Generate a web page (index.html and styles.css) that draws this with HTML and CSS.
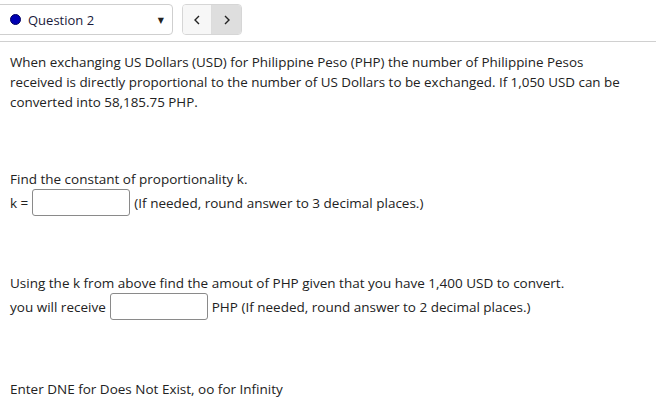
FILE: index.html
```html
<!DOCTYPE html>
<html>
<head>
<meta charset="utf-8">
<link rel="stylesheet" href="styles.css">
</head>
<body>
<div class="header">
  <div class="qselect">
    <span class="dot"></span>
    <span class="qlabel">Question 2</span>
    <span class="caret">&#9660;</span>
  </div>
  <div class="navgroup">
    <div class="navbtn prev"><svg width="8" height="10" viewBox="0 0 8 10"><path d="M6 1 L2 5 L6 9" fill="none" stroke="#222" stroke-width="1.4"/></svg></div>
    <div class="navbtn next"><svg width="8" height="10" viewBox="0 0 8 10"><path d="M2 1 L6 5 L2 9" fill="none" stroke="#222" stroke-width="1.4"/></svg></div>
  </div>
</div>
<div class="content">
  <p class="intro">When exchanging US Dollars (USD) for Philippine Peso (PHP) the number of Philippine Pesos received is directly proportional to the number of US Dollars to be exchanged. If 1,050 USD can be converted into 58,185.75 PHP.</p>
  <div class="part part1">
    <div class="line">Find the constant of proportionality k.</div>
    <div class="row">k =<span class="box"></span>(If needed, round answer to 3 decimal places.)</div>
  </div>
  <div class="part part2">
    <div class="line">Using the k from above find the amout of PHP given that you have 1,400 USD to convert.</div>
    <div class="row">you will receive<span class="box"></span>PHP (If needed, round answer to 2 decimal places.)</div>
  </div>
  <div class="part part3">
    <div class="line">Enter DNE for Does Not Exist, oo for Infinity</div>
  </div>
</div>
</body>
</html>
```
FILE: styles.css
```css
* { box-sizing: border-box; }
html, body { margin: 0; padding: 0; background: #fff; }
body {
  font-family: "Open Sans", "DejaVu Sans", sans-serif;
  font-size: 13.5px;
  color: #222;
  width: 656px;
  height: 406px;
  overflow: hidden;
}
.header {
  display: flex;
  align-items: flex-start;
  gap: 9px;
  padding-top: 4px;
  height: 42px;
  border-bottom: 1px solid #d0d0d0;
  margin-left: -6px;
}
.qselect {
  display: flex;
  align-items: center;
  width: 179px;
  height: 31px;
  border: 1px solid #cfcfcf;
  border-radius: 4px;
  padding-left: 15px;
  padding-right: 8px;
}
.dot {
  width: 11px;
  height: 11px;
  border-radius: 50%;
  background: #0000b3;
  border: 1px solid #000060;
  margin-right: 7px;
}
.qlabel { flex: 1; color: #1a1a3a; font-size: 13px; }
.caret { font-size: 8px; color: #222; }
.navgroup {
  display: flex;
  height: 31px;
  border: 1px solid #d6d6d6;
  border-radius: 4px;
  overflow: hidden;
}
.navbtn {
  width: 29px;
  display: flex;
  align-items: center;
  justify-content: center;
}
.prev { background: #f7f7f7; border-right: 1px solid #dcdcdc; }
.next { background: #dedede; }
.content { padding: 0 10px; }
.intro {
  margin: 10px 0 0 0;
  line-height: 20px;
  font-size: 13.4px;
  color: #222;
  width: 622px;
}
.part1 { margin-top: 57px; }
.part2 { margin-top: 57px; }
.part3 { margin-top: 59px; }
.line { line-height: 20px; }
.row { display: flex; align-items: center; line-height: 20px; }
.box {
  display: inline-block;
  width: 98px;
  height: 27px;
  border: 1px solid #8a8a8a;
  border-radius: 3px;
  margin: 0 4px 0 4px;
  background: #fff;
}
```
